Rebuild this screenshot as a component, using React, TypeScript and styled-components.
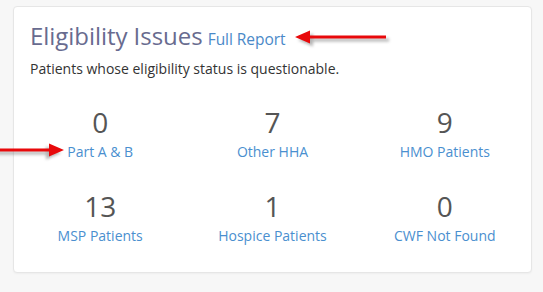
import React from 'react';
import styled, { createGlobalStyle } from 'styled-components';

const Global = createGlobalStyle`
    body {
        margin: 0;
        background-color: #f7f7f7;
        font-family: "Open Sans", "Liberation Sans", sans-serif;
    }
`
const Page = styled.div`
    position: relative;
    width: 543px;
    height: 292px;
    padding: 6px 0 0 13px;
    box-sizing: border-box;
`
const Card = styled.section`
    width: 519px;
    height: 267px;
    box-sizing: border-box;
    background-color: #fff;
    border: 1px solid #e6e6e6;
    border-radius: 4px;
    box-shadow: 0 1px 2px rgba(0, 0, 0, 0.04);
    padding: 12px 0 0 0;
`
const Header = styled.div`
    padding: 0 16px;
`
const Title = styled.h2`
    margin: 0;
    font-size: 24px;
    font-weight: 400;
    line-height: 34px;
    color: #686b8f;
    letter-spacing: -0.05px;
    a {
        font-size: 15.5px;
        color: #4a89c8;
        text-decoration: none;
        margin-left: -1px;
    }
`
const Description = styled.p`
    margin: 3px 0 0;
    font-size: 14px;
    line-height: 19px;
    color: #333;
`
const Stats = styled.div`
    display: grid;
    grid-template-columns: repeat(3, 1fr);
    row-gap: 25px;
    margin-top: 25px;
`
const Stat = styled.div`
    display: flex;
    flex-direction: column;
    align-items: center;
`
const Count = styled.span`
    font-size: 28px;
    line-height: 39px;
    color: #555;
`
const Label = styled.a`
    font-size: 14px;
    line-height: 20px;
    color: #4a8fcf;
    text-decoration: none;
`
const Arrow = styled.svg<{ $left: number; $top: number }>`
    position: absolute;
    left: ${p => p.$left}px;
    top: ${p => p.$top}px;
    overflow: visible;
`

const stats = [
    { n: 0, label: 'Part A & B' },
    { n: 7, label: 'Other HHA' },
    { n: 9, label: 'HMO Patients' },
    { n: 13, label: 'MSP Patients' },
    { n: 1, label: 'Hospice Patients' },
    { n: 0, label: 'CWF Not Found' },
];

function RedArrow({ left, top, width, flip }: { left: number; top: number; width: number; flip?: boolean }) {
    const head = 15;
    const d = `M0 7 L${head} 0.5 L${head} 5.5 L${width} 5.5 L${width} 8.5 L${head} 8.5 L${head} 13.5 Z`;
    return (
        <Arrow $left={left} $top={top} width={width} height={14} viewBox={`0 0 ${width} 14`}>
            <defs>
                <filter id={`sh${left}`} x="-20%" y="-100%" width="140%" height="300%">
                    <feGaussianBlur stdDeviation="1.5" />
                </filter>
            </defs>
            <g transform={flip ? `translate(${width} 0) scale(-1 1)` : undefined}>
                <path d={d} fill="#777" opacity={0.55} transform="translate(3 3)" filter={`url(#sh${left})`} />
                <path d={d} fill="#e8090b" />
            </g>
        </Arrow>
    );
}

export default function App() {
    return (
        <Page>
            <Global />
            <Card>
                <Header>
                    <Title>
                        Eligibility Issues <a href="#report">Full Report</a>
                    </Title>
                    <Description>Patients whose eligibility status is questionable.</Description>
                </Header>
                <Stats>
                    {stats.map((s, i) => (
                        <Stat key={i}>
                            <Count>{s.n}</Count>
                            <Label href="#">{s.label}</Label>
                        </Stat>
                    ))}
                </Stats>
            </Card>
            <RedArrow left={295} top={30} width={91} />
            <RedArrow left={-2} top={143} width={66} flip />
        </Page>
    );
}
